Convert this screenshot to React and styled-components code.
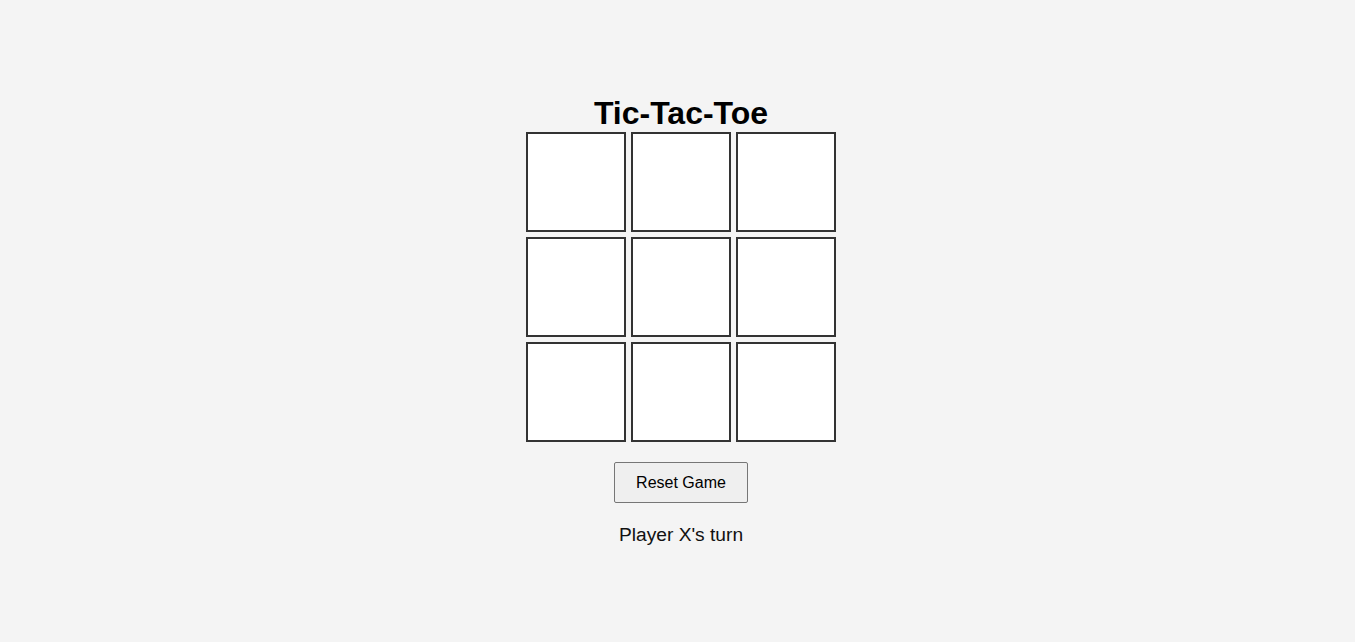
import React, { useState } from "react";
import styled, { createGlobalStyle } from "styled-components";

const GlobalStyle = createGlobalStyle`
  html, body {
    margin: 0;
    padding: 0;
    background: #f4f4f4;
    font-family: "Liberation Sans", Arial, sans-serif;
  }
`;

const Page = styled.div`
  min-height: 642px;
  box-sizing: border-box;
  display: flex;
  flex-direction: column;
  align-items: center;
  padding: 95px 0 0 7px;
`;

const Title = styled.h1`
  margin: 0;
  font-size: 32px;
  font-weight: 700;
  color: #000;
`;

const Board = styled.div`
  display: grid;
  grid-template-columns: repeat(3, 100px);
  grid-template-rows: repeat(3, 100px);
  gap: 5px;
`;

const Cell = styled.button`
  box-sizing: border-box;
  width: 100px;
  height: 100px;
  padding: 0;
  background: #fff;
  border: 2px solid #333;
  font-family: inherit;
  font-size: 48px;
  font-weight: 700;
  color: #333;
  cursor: pointer;
`;

const ResetButton = styled.button`
  margin-top: 20px;
  padding: 10px 21px;
  font-family: "Liberation Sans", Arial, sans-serif;
  font-size: 16px;
  line-height: 19px;
  color: #000;
  background: #efefef;
  border: 1px solid #767676;
  border-radius: 2px;
  cursor: pointer;
`;

const Status = styled.p`
  margin: 21px 0 0;
  font-size: 19.2px;
  color: #111;
`;

const App = () => {
  const [cells, setCells] = useState(Array(9).fill(null));
  const [xNext, setXNext] = useState(true);

  const play = (i) => {
    if (cells[i]) return;
    const next = cells.slice();
    next[i] = xNext ? "X" : "O";
    setCells(next);
    setXNext(!xNext);
  };

  const reset = () => {
    setCells(Array(9).fill(null));
    setXNext(true);
  };

  return (
    <>
      <GlobalStyle />
      <Page>
        <Title>Tic-Tac-Toe</Title>
        <Board>
          {cells.map((c, i) => (
            <Cell key={i} onClick={() => play(i)}>
              {c}
            </Cell>
          ))}
        </Board>
        <ResetButton onClick={reset}>Reset Game</ResetButton>
        <Status>Player {xNext ? "X" : "O"}'s turn</Status>
      </Page>
    </>
  );
};

export default App;
